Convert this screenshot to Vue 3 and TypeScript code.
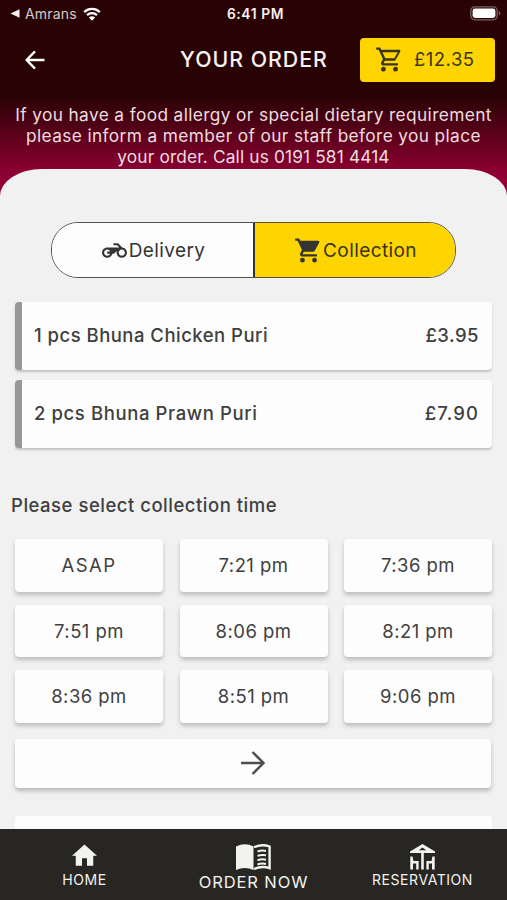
<script setup lang="ts">
interface OrderItem {
  quantity: number
  name: string
  price: string
}

const items: OrderItem[] = [
  { quantity: 1, name: 'Bhuna Chicken Puri', price: '£3.95' },
  { quantity: 2, name: 'Bhuna Prawn Puri', price: '£7.90' },
]

const times: string[] = [
  'ASAP', '7:21 pm', '7:36 pm',
  '7:51 pm', '8:06 pm', '8:21 pm',
  '8:36 pm', '8:51 pm', '9:06 pm',
]

const notice: string[] = [
  'If you have a food allergy or special dietary requirement',
  'please inform a member of our staff before you place',
  'your order. Call us 0191 581 4414',
]
</script>

<template>
  <div class="screen">
    <header class="top">
      <div class="status">
        <div class="status-left">
          <svg class="caret" viewBox="0 0 10 10"><path d="M0 5 10 .3v9.4z" /></svg>
          <span class="carrier">Amrans</span>
          <svg class="wifi" viewBox="0 0 18 14">
            <path d="M1.2 5.1a11.2 11.2 0 0 1 15.6 0M4 8.2a7.2 7.2 0 0 1 10 0" />
            <path class="dot" d="M9 13.8 5.9 10.6a4.5 4.5 0 0 1 6.2 0z" />
          </svg>
        </div>
        <span class="clock">6:41 PM</span>
        <svg class="battery" viewBox="0 0 31 15">
          <rect x=".8" y=".8" width="26.4" height="13" rx="4" class="shell" />
          <rect x="2.6" y="2.6" width="22.8" height="9.4" rx="2.4" class="charge" />
          <path d="M28.8 5.2q1.6.6 1.6 2.1t-1.6 2.1z" class="cap" />
        </svg>
      </div>
      <div class="bar">
        <svg class="back" viewBox="0 0 20 20"><path d="M19.500 10H2M10 1.400 1.600 10l8.400 8.600" /></svg>
        <h1 class="title">YOUR ORDER</h1>
        <button class="basket">
          <svg viewBox="0 0 24 24">
            <path d="M17,18A2,2 0 0,1 19,20A2,2 0 0,1 17,22C15.89,22 15,21.1 15,20C15,18.89 15.89,18 17,18M1,2H4.27L5.21,4H20A1,1 0 0,1 21,5C21,5.17 20.95,5.34 20.88,5.5L17.3,11.97C16.96,12.58 16.3,13 15.55,13H8.1L7.2,14.63L7.17,14.75A0.25,0.25 0 0,0 7.42,15H19V17H7C5.89,17 5,16.1 5,15C5,14.65 5.09,14.32 5.24,14.04L6.6,11.59L3,4H1V2M7,18A2,2 0 0,1 9,20A2,2 0 0,1 7,22C5.89,22 5,21.1 5,20C5,18.89 5.89,18 7,18M16,11L18.78,6H6.14L8.5,11H16Z" />
          </svg>
          <span>£12.35</span>
        </button>
      </div>
      <p class="notice">
        <span v-for="line in notice" :key="line" class="notice-line">{{ line }}</span>
      </p>
    </header>

    <main class="panel">
      <div class="toggle">
        <button class="option">
          <svg class="bike" viewBox="0 0 24 24">
            <path d="M19.44 9.03L15.41 5H11v2h3.59l2 2H5c-2.8 0-5 2.2-5 5s2.2 5 5 5c2.46 0 4.45-1.69 4.9-4h1.65l2.77-2.77c-.21.54-.32 1.14-.32 1.77 0 2.8 2.2 5 5 5s5-2.2 5-5c0-2.65-1.97-4.77-4.56-4.97zM7.82 15C7.4 16.15 6.28 17 5 17c-1.63 0-3-1.37-3-3s1.37-3 3-3c1.28 0 2.4.85 2.82 2H5v2h2.82zM19 17c-1.66 0-3-1.34-3-3s1.34-3 3-3 3 1.34 3 3-1.34 3-3 3z" />
          </svg>
          <span class="delivery">Delivery</span>
        </button>
        <button class="option active">
          <svg class="cart" viewBox="0 0 24 24">
            <path d="M7 18a2 2 0 1 0 0 4 2 2 0 0 0 0-4zM17 18a2 2 0 1 0 0 4 2 2 0 0 0 0-4zM1 2v2h2l3.600 7.590-1.350 2.450C4.500 15.370 5.480 17 7 17h12v-2H7.420a.25.25 0 0 1-.22-.37L8.100 13h7.450c.75 0 1.410-.41 1.750-1.030l3.580-6.490A1 1 0 0 0 20 4H5.210l-.94-2z" />
          </svg>
          <span class="collection">Collection</span>
        </button>
      </div>

      <ul class="items">
        <li v-for="item in items" :key="item.name" class="item">
          <span>{{ item.quantity }} pcs {{ item.name }}</span>
          <span class="price">{{ item.price }}</span>
        </li>
      </ul>

      <h2 class="prompt">Please select collection time</h2>
      <div class="times">
        <button
          v-for="time in times"
          :key="time"
          class="slot"
          :class="{ asap: time === 'ASAP' }"
        >{{ time }}</button>
      </div>
      <button class="more">
        <svg viewBox="0 0 24 24"><path d="M0 12h22.500M11.500 1 22.500 12l-11 11" /></svg>
      </button>
      <div class="next-card"></div>
    </main>

    <nav class="tabs">
      <a class="tab">
        <svg class="home" viewBox="2 3 20 17"><path d="M10 20v-6h4v6h5v-8h3L12 3 2 12h3v8z" /></svg>
        <span class="tab-home">HOME</span>
      </a>
      <a class="tab order">
        <svg class="book" viewBox="0 0 35 27">
          <path d="M0 2.500Q9-2 17.500 2.500v23.500Q9 22 0 26z" />
          <path class="page" d="M18 3.200q8-3.600 15.600-.7v21.700Q26 21.500 18 25" />
          <path class="lines" d="M21.500 7.500q4-1.500 8.500-.6M21.500 11.900q4-1.500 8.500-.6M21.500 16.300q4-1.500 8.500-.6M21.500 20.500q4-1.500 8.500-.6" />
        </svg>
        <span class="tab-order">ORDER NOW</span>
      </a>
      <a class="tab">
        <svg class="table" viewBox="0 0 25 26">
          <path fill-rule="evenodd" d="M12.500 0 25 7.600V9H0V7.600zM12.500 3.400 8.800 6.200h7.400z" />
          <path d="M11.200 9h2.600v16.500h-2.600z" />
          <path d="M.3 12.500h2.300l.8 4.500h5.200v8.500H6.200v-6H3v6H.3zM24.700 12.500h-2.300l-.8 4.500h-5.200v8.500h2.400v-6H22v6h2.700z" />
        </svg>
        <span class="tab-reservation">RESERVATION</span>
      </a>
    </nav>
  </div>
</template>

<style>
body {
  margin: 0;
  background: #f1f1f1;
}
</style>

<style scoped>
.screen {
  display: flex;
  flex-direction: column;
  width: 507px;
  height: 900px;
  overflow: hidden;
  box-sizing: border-box;
  font-family: Inter, "Open Sans", sans-serif;
  color: #404040;
  background: linear-gradient(#290303 0, #290303 96px, #8d0032 173px, #98003a 196px, #282622 196px);
}
button {
  margin: 0;
  padding: 0;
  border: 0;
  font: inherit;
  color: inherit;
  background: none;
}
svg {
  display: block;
  flex: none;
  fill: currentColor;
}
.top {
  height: 169px;
  flex: none;
  color: #f8f1f1;
}
.status {
  display: grid;
  grid-template-columns: 1fr auto 1fr;
  align-items: center;
  height: 27px;
  padding: 0 6px 0 10px;
}
.status-left {
  display: flex;
  align-items: center;
}
.caret {
  width: 10px;
  height: 9px;
}
.carrier {
  margin-left: 5px;
  font-size: 14px;
  letter-spacing: 0.2px;
  color: #d8caca;
}
.wifi {
  width: 18px;
  height: 14px;
  margin-left: 6px;
}
.wifi path {
  fill: none;
  stroke: #fff;
  stroke-width: 2.3;
}
.wifi .dot {
  fill: #fff;
  stroke: none;
}
.clock {
  font-size: 13.8px;
  font-weight: 600;
  letter-spacing: 0.6px;
}
.battery {
  justify-self: end;
  width: 31px;
  height: 15px;
}
.shell {
  fill: none;
  stroke: #7b6060;
  stroke-width: 1.3;
}
.charge {
  fill: #fff;
}
.cap {
  fill: #7b6060;
}
.bar {
  display: grid;
  grid-template-columns: 1fr auto 1fr;
  align-items: center;
  height: 65px;
  padding: 0 12px 0 13px;
}
.back {
  width: 20px;
  height: 20px;
  margin-left: 12px;
}
.back path {
  fill: none;
  stroke: #fff;
  stroke-width: 2.3;
}
.title {
  margin: 0;
  padding-bottom: 2px;
  font-size: 21.3px;
  font-weight: 500;
  line-height: 28px;
  letter-spacing: 1px;
}
.basket {
  justify-self: end;
  display: flex;
  align-items: center;
  width: 135px;
  height: 44px;
  padding-left: 15px;
  box-sizing: border-box;
  border-radius: 4px;
  background: #ffd500;
  color: #3a3520;
  font-size: 18.5px;
  letter-spacing: 0.5px;
}
.basket svg {
  width: 29px;
  height: 29px;
  margin-right: 10px;
}
.basket span {
  padding-bottom: 2px;
}
.notice {
  margin: 12px 0 0;
  font-size: 17.3px;
  line-height: 21px;
  letter-spacing: 0.37px;
  text-align: center;
  color: #efdde0;
}
.notice-line {
  display: block;
  white-space: nowrap;
}
.notice-line:last-child {
  letter-spacing: 0.15px;
}
.panel {
  flex: 1;
  min-height: 0;
  overflow: hidden;
  padding: 53px 15px 0;
  border-radius: 42px 42px 0 0 / 27px 27px 0 0;
  background: #f1f1f1;
}
.toggle {
  display: flex;
  width: 405px;
  height: 56px;
  margin: 0 auto;
  box-sizing: border-box;
  border: 1px solid #56524a;
  border-radius: 27px;
  overflow: hidden;
}
.option {
  display: flex;
  align-items: center;
  justify-content: center;
  flex: 1;
  padding-left: 2px;
  background: #fdfdfd;
  font-size: 19px;
  letter-spacing: 0.4px;
  color: #343434;
}
.active {
  padding-left: 1px;
  background: #ffd500;
  border-left: 2px solid #35342c;
  color: #38341f;
}
.bike {
  width: 25px;
  height: 25px;
  margin-right: 2px;
}
.cart {
  width: 29px;
  height: 29px;
  color: #353435;
}
.items {
  display: grid;
  gap: 10px;
  margin: 24px 0 0;
  padding: 0;
  list-style: none;
}
.item {
  display: flex;
  align-items: center;
  justify-content: space-between;
  height: 68px;
  padding: 0 13px 2px 12px;
  box-sizing: border-box;
  border-left: 7px solid #979797;
  border-radius: 4px;
  background: #fdfdfd;
  box-shadow: 0 2px 2px #c3c3c3;
  font-size: 18.5px;
  font-weight: 450;
  letter-spacing: 0.48px;
}
.item:last-child {
  letter-spacing: 0.6px;
}
.item:last-child .price {
  letter-spacing: 1.1px;
}
.prompt {
  margin: 43px 0 0 -4px;
  font-size: 18.5px;
  font-weight: 450;
  line-height: 28px;
  letter-spacing: 0.51px;
}
.times {
  display: grid;
  grid-template-columns: repeat(3, 148px);
  justify-content: space-between;
  row-gap: 13px;
  margin-top: 20px;
}
.slot {
  height: 52.6px;
  border-radius: 4px;
  background: #fdfdfd;
  box-shadow: 0 3px 4px #bdbdbd;
  font-size: 18.5px;
  letter-spacing: 0.45px;
}
.asap {
  letter-spacing: 1.4px;
}
.more {
  display: flex;
  align-items: center;
  justify-content: center;
  width: 476px;
  height: 49px;
  margin-top: 16px;
  border-radius: 4px;
  background: #fdfdfd;
  box-shadow: 0 3px 4px #b9b9b9;
}
.more svg {
  width: 24px;
  height: 24px;
}
.more path {
  fill: none;
  stroke: #4c4c4c;
  stroke-width: 2.4;
}
.next-card {
  height: 40px;
  margin-top: 28px;
  border-radius: 4px;
  background: #fdfdfd;
}
.tabs {
  display: grid;
  grid-template-columns: repeat(3, 1fr);
  flex: none;
  height: 71px;
  background: #282622;
  color: #f2f2f0;
}
.tab {
  display: flex;
  flex-direction: column;
  align-items: center;
  padding-top: 15px;
  font-size: 14px;
  letter-spacing: 0.55px;
  white-space: nowrap;
}
.home {
  width: 25px;
  height: 22px;
  margin-bottom: 5px;
}
.book {
  width: 35px;
  height: 27px;
  margin-bottom: 1px;
}
.page,
.lines {
  fill: none;
  stroke: currentColor;
  stroke-width: 2.4;
}
.lines {
  stroke-width: 2;
}
.order {
  font-size: 16.5px;
  letter-spacing: 0.9px;
}
.table {
  width: 25px;
  height: 26px;
  margin-bottom: 1px;
}
</style>
